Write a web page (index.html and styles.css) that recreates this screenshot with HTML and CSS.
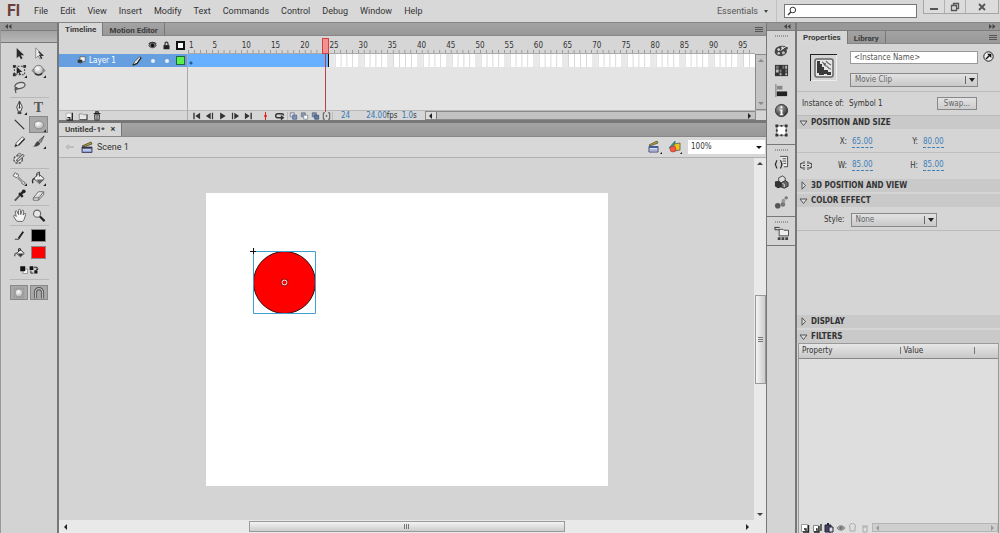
FILE: index.html
```html
<!DOCTYPE html>
<html lang="en">
<head>
<meta charset="utf-8">
<title>Untitled-1* - Flash</title>
<link rel="stylesheet" href="styles.css">
</head>
<body>
<div class="app">
  <header class="menubar">
    <div class="logo">Fl</div>
    <nav class="menu">
      <button>File</button><button>Edit</button><button>View</button><button>Insert</button><button>Modify</button><button>Text</button><button>Commands</button><button>Control</button><button>Debug</button><button>Window</button><button>Help</button>
    </nav>
    <button class="workspace">Essentials <span class="caret"></span></button>
    <label class="search">
      <svg width="10" height="10" viewBox="0 0 10 10"><circle cx="5.8" cy="4" r="2.8" fill="none" stroke="#333"/><path d="M3.8 6 1 9" stroke="#333" stroke-width="1.3"/></svg>
      <input type="text" aria-label="Search">
    </label>
    <div class="window-buttons">
      <button aria-label="Minimize"><svg width="10" height="10" viewBox="0 0 10 10"><path d="M1 6h8v2H1z" fill="#555"/></svg></button>
      <button aria-label="Restore"><svg width="10" height="10" viewBox="0 0 10 10"><path d="M3.5 3V1.5h5v5H7M1.5 3.5h5v5h-5z" fill="none" stroke="#555" stroke-width="1.3"/></svg></button>
      <button class="close" aria-label="Close"><svg width="10" height="10" viewBox="0 0 10 10"><path d="M2 2l6 6M8 2 2 8" stroke="#555" stroke-width="1.8"/></svg></button>
    </div>
  </header>

  <div class="workspace-body">
    <aside class="tools">
      <div class="dock-head"><svg width="7" height="5" viewBox="0 0 7 5"><path d="M3 0v5L0 2.500zM6.500 0v5l-3-2.500z" fill="#444"/></svg></div>
      <div class="tools-grip"></div>
      <div class="tool-group">
        <button aria-label="Selection"><svg viewBox="0 0 16 16"><path d="M5 2v11l2.600-2.400L9.500 14l1.800-1-1.900-3.200H13z" fill="#2b2b2b"/></svg></button>
        <button aria-label="Subselection"><svg viewBox="0 0 16 16"><path d="M5 2v11l2.600-2.400L9.500 14l1.800-1-1.900-3.200H13z" fill="#eee" stroke="#777" stroke-width=".8"/><path d="M8 6l4 4H9.500l2 3.500" fill="none" stroke="#333" stroke-width="1.500"/></svg></button>
        <button aria-label="Free Transform"><svg viewBox="0 0 16 16"><path d="M2.500 3.500h11v9h-11z" fill="none" stroke="#333" stroke-dasharray="2 1.500"/><path d="M1 2h3v3H1zM12 2h3v3h-3zM1 11h3v3H1z" fill="#333"/><path d="M5 4v8l2-2 1.500 3 1-1-1.500-2.500H11z" fill="#222"/><path d="M16 16v-3l-3 3z" fill="#222"/></svg></button>
        <button aria-label="3D Rotation"><svg viewBox="0 0 16 16"><path d="M1 8c2-3 12-3 14 0-2 4-12 4-14 0z" fill="#bbb" stroke="#666" stroke-width=".9"/><circle cx="8" cy="7.500" r="5" fill="url(#ball)" stroke="#666" stroke-width=".8"/><path d="M4 11c2 2.500 6 2.500 8 0" fill="none" stroke="#333" stroke-width="1.500"/><path d="M16 16v-3l-3 3z" fill="#222"/></svg></button>
        <button aria-label="Lasso"><svg viewBox="0 0 16 16"><ellipse cx="8.500" cy="6" rx="5.500" ry="3.200" fill="#ddd" stroke="#555" stroke-width="1.300" transform="rotate(-12 8 6)"/><path d="M4 8c-1.500 1 0 3 1.500 2S4.500 7 3.500 9s1 2 .5 5" fill="none" stroke="#555" stroke-width="1.200"/></svg></button>
      </div>
      <div class="tool-group">
        <button aria-label="Pen"><svg viewBox="0 0 16 16"><path d="M8 1 5 7.500 6.500 12h3L11 7.500z" fill="#e8e8e8" stroke="#444"/><path d="M8 2v6" stroke="#333"/><circle cx="8" cy="8" r="1" fill="#333"/><path d="M6 12.500h4V15H6z" fill="#444"/><path d="M16 16v-3l-3 3z" fill="#222"/></svg></button>
        <button class="text-tool" aria-label="Text">T</button>
        <button aria-label="Line"><svg viewBox="0 0 16 16"><path d="M3 3l10 10" stroke="#333" stroke-width="1.300"/></svg></button>
        <button class="selected" aria-label="Oval"><svg viewBox="0 0 16 16"><ellipse cx="8" cy="8" rx="5.500" ry="4.500" fill="url(#ball)" stroke="#777" stroke-width=".8"/><path d="M16 16v-3l-3 3z" fill="#222"/></svg></button>
        <button aria-label="Pencil"><svg viewBox="0 0 16 16"><path d="M3 13.500 4.500 9.500 11 3l2.500 2L7 12z" fill="#eee" stroke="#666"/><path d="M3 13.500l3-1.200-1.800-1.700z" fill="#222"/><path d="M7 12l6.500-7" stroke="#333" stroke-width="1.500"/></svg></button>
        <button aria-label="Brush"><svg viewBox="0 0 16 16"><path d="M14 2 8.500 7l2 2z" fill="#999" stroke="#555"/><path d="M2 13c3 0 2-4 5.500-5.500L10 10c-2 3-5 4-8 3z" fill="#444"/><path d="M16 16v-3l-3 3z" fill="#222"/></svg></button>
        <button aria-label="Deco"><svg viewBox="0 0 16 16"><ellipse cx="6.500" cy="9" rx="4.500" ry="4" fill="#e4e4e4" stroke="#555" stroke-width="1.500" stroke-dasharray="2.500 1"/><path d="M5 11 12.500 4" stroke="#555" stroke-width="3"/><path d="M6 10 12 4.500" stroke="#ddd" stroke-width="1.200"/><path d="M5 4.500l3-2 2 1" fill="none" stroke="#555"/></svg></button>
      </div>
      <div class="tool-group">
        <button aria-label="Bone"><svg viewBox="0 0 16 16"><path d="M3 14c-2-1 0-3 1-2.500L9.500 6C8 4 10 2.500 11 3.500c0-2 3-2 2.500 0 2 .5 1 3-.5 2.500-.8 1-1.500 1-2.500 1L5.500 12c.5 1-1 3-2.500 2z" transform="matrix(-1 0 0 1 16 0)" fill="#eee" stroke="#555"/><path d="M16 16v-3l-3 3z" fill="#222"/></svg></button>
        <button aria-label="Paint Bucket"><svg viewBox="0 0 16 16"><path d="M3 8l5-5 6 5-5 5.500z" fill="#eee" stroke="#444"/><path d="M6 9h8l-5 4.500z" fill="#666"/><path d="M6 6V2.500L9 1v5" fill="none" stroke="#444"/><path d="M4 8c-2 0-3 2-2 5" fill="none" stroke="#333" stroke-width="1.500"/><path d="M16 16v-3l-3 3z" fill="#222"/></svg></button>
        <button aria-label="Eyedropper"><svg viewBox="0 0 16 16"><path d="M9 7l-6 6.500" stroke="#555" stroke-width="2"/><path d="M7.500 5.500l4 4M9.500 6.500l3-3" stroke="#222" stroke-width="2.500"/><circle cx="12.500" cy="3.500" r="2" fill="#222"/></svg></button>
        <button aria-label="Eraser"><svg viewBox="0 0 16 16"><path d="M2.500 10.500 8 4h5.500L8.500 10.500zM2.500 10.500V13H8l5.500-6V4M8.500 10.500 8 13" fill="#eee" stroke="#666"/></svg></button>
      </div>
      <div class="tool-group">
        <button aria-label="Hand"><svg viewBox="0 0 16 16"><path d="M5 14 2 9.500C1 7.500 3 7 4.500 9L3.500 4c0-1.500 1.500-1.500 2 0L7 7V2.500c0-1.500 2-1.500 2 0L9.300 7l1.200-4c.5-1.500 2-1 1.800.5L12 7.500l1-1.500c1-1 2 0 1.500 1L13 12l-2 2.500z" fill="#f4f4f4" stroke="#555" stroke-width=".9"/></svg></button>
        <button aria-label="Zoom"><svg viewBox="0 0 16 16"><circle cx="6.500" cy="6" r="3.800" fill="#e8e8e8" stroke="#666" stroke-width="1.200"/><path d="M9.500 9l5 5" stroke="#222" stroke-width="2.300"/></svg></button>
      </div>
      <div class="tool-group">
        <button aria-label="Stroke Color"><svg viewBox="0 0 16 16"><path d="M3 12h4l5-8" fill="none" stroke="#444" stroke-width="1.300"/><path d="M7 11l5-7" stroke="#222" stroke-width="1.800"/></svg></button>
        <button aria-label="Stroke swatch"><span class="swatch black"></span></button>
        <button aria-label="Fill Color"><svg viewBox="0 0 16 16"><path d="M5 9l4-4 4 4-4 3.500z" fill="#f4f4f4" stroke="#333"/><path d="M7 7V4h2v2M5 8.500c-2 0-2 1-2 3.500" fill="none" stroke="#222"/><path d="M6 9h6l-3 3.500z" fill="#333"/></svg></button>
        <button aria-label="Fill swatch"><span class="swatch red"></span></button>
        <button class="end" aria-label="Black and White"><svg class="small" viewBox="0 0 16 16"><path d="M6.500 6.500h7v7h-7z" fill="#fff" stroke="#666"/><path d="M2 2h8v8H2z" fill="#111"/></svg></button>
        <button class="start" aria-label="Swap Colors"><svg class="small" viewBox="0 0 16 16"><path d="M1 2h6v6H1zM8.500 8.500h5v5h-5z" fill="#111"/><path d="M8 3.500h5V7M11 6l2 2 2-2M3 9v4h4" fill="none" stroke="#222" stroke-width="1.500"/></svg></button>
      </div>
      <div class="tool-group options">
        <button class="selected" aria-label="Object Drawing"><svg viewBox="0 0 16 16"><path d="M2.500 2.500h11v11h-11z" fill="none" stroke="#888" stroke-dasharray="1 1"/><circle cx="8" cy="8" r="4.500" fill="url(#ball)" stroke="#888" stroke-width=".8"/></svg></button>
        <button class="selected" aria-label="Snap to Objects"><svg viewBox="0 0 16 16"><path d="M4 14V7a4 4 0 0 1 8 0v7" fill="none" stroke="#555" stroke-width="3.600"/><path d="M4 14V7a4 4 0 0 1 8 0v7" fill="none" stroke="#bbb" stroke-width="1.500"/></svg></button>
      </div>
    </aside>

    <main class="center">
      <section class="timeline">
        <div class="tabs">
          <button class="tab active">Timeline</button><button class="tab">Motion Editor</button>
          <span class="panel-menu"></span>
        </div>
        <div class="timeline-grid">
          <div class="layer-head">
            <svg width="9" height="9" viewBox="0 0 12 12"><path d="M1 6c2-4 8-4 10 0-2 4-8 4-10 0z" fill="#777" stroke="#333"/><circle cx="6" cy="6" r="2.200" fill="#111"/><path d="M1 4c2-3 8-3 10 0" fill="none" stroke="#333" stroke-width="1.500"/></svg>
            <svg width="9" height="9" viewBox="0 0 12 12"><path d="M2 5.500h8V11H2z" fill="#222"/><path d="M4 6V3.500a2 2 0 0 1 4 0V6" fill="none" stroke="#333" stroke-width="1.600"/></svg>
            <span class="outline-box"></span>
          </div>
          <div class="ruler">
            <span class="ticks first">1</span><span class="ticks">5</span><span class="ticks">10</span><span class="ticks">15</span><span class="ticks">20</span><span class="ticks">25</span><span class="ticks">30</span><span class="ticks">35</span><span class="ticks">40</span><span class="ticks">45</span><span class="ticks">50</span><span class="ticks">55</span><span class="ticks">60</span><span class="ticks">65</span><span class="ticks">70</span><span class="ticks">75</span><span class="ticks">80</span><span class="ticks">85</span><span class="ticks">90</span><span class="ticks last">95</span>
          </div>
          <div class="corner"></div>
          <div class="layers">
            <div class="layer-row">
              <svg class="layer-icon" width="9" height="9" viewBox="0 0 12 12"><path d="M4 1h7v6H8l-3 3H4z" fill="#f4f4f4" stroke="#555"/><path d="M1 5h6v4H1z" fill="#333"/></svg>
              <span class="layer-name">Layer 1</span>
              <svg width="10" height="10" viewBox="0 0 12 12"><path d="M1 11l2-4 6-6 2 1-5 7z" fill="#eee" stroke="#444"/><path d="M1 11l5-2 5-7" stroke="#222" stroke-width="1.500" fill="none"/></svg>
              <span class="dot"></span><span class="dot"></span><span class="layer-color"></span>
            </div>
          </div>
          <div class="frames">
            <div class="frame-row"><span class="span-block"></span><span class="cells"></span><span class="cells"></span><span class="cells"></span><span class="cells"></span><span class="cells"></span><span class="cells"></span><span class="cells"></span><span class="cells"></span><span class="cells"></span><span class="cells"></span><span class="cells"></span><span class="cells"></span><span class="cells"></span><span class="cells"></span><span class="cells last"></span></div>
          </div>
          <div class="vbar"><i class="up"></i><i class="down"></i></div>
          <div class="layer-foot">
            <svg width="10" height="10" viewBox="0 0 12 12"><path d="M2.500 2.500h7v8h-7z" fill="#f4f4f4" stroke="#aaa"/><path d="M10 2v9H3M4 8h3v3" stroke="#222" stroke-width="1.500" fill="none"/></svg>
            <svg width="10" height="10" viewBox="0 0 12 12"><path d="M1.500 3.500h4l1 1h4v6h-9z" fill="#e8e8e8" stroke="#888"/><path d="M2 10.500h9V4" stroke="#333" fill="none"/></svg>
            <svg width="10" height="10" viewBox="0 0 12 12"><path d="M2 3h8M4.500 2.500V1h3v1.500" stroke="#222" stroke-width="1.300" fill="none"/><path d="M3 4.500h6L8.500 11h-5z" fill="#ddd" stroke="#222"/><path d="M5 5v6M7 5v6" stroke="#444"/></svg>
          </div>
          <div class="playback">
            <button aria-label="First frame"><svg viewBox="0 0 10 10"><path d="M1 1h1.700v8H1zM9.500 1v8l-6-4z" fill="#333"/></svg></button>
            <button aria-label="Step back"><svg viewBox="0 0 10 10"><path d="M8 1h1.500v8H8zM6.500 1v8l-6-4z" fill="#333"/></svg></button>
            <button aria-label="Play"><svg viewBox="0 0 10 10"><path d="M2 0.500 9 5 2 9.500z" fill="#333"/></svg></button>
            <button aria-label="Step forward"><svg viewBox="0 0 10 10"><path d="M0.500 1H2v8H.5zM3.500 1l6 4-6 4z" fill="#333"/></svg></button>
            <button aria-label="Last frame"><svg viewBox="0 0 10 10"><path d="M7.500 1h1.700v8H7.500zM.5 1l6 4-6 4z" fill="#333"/></svg></button>
            <button class="gap" aria-label="Center frame"><svg viewBox="0 0 10 10"><path d="M5 0v10" stroke="#d22" stroke-width="1.300"/><path d="M5 2.500 7 5 5 7.500 3 5z" fill="#d22"/></svg></button>
            <button aria-label="Loop"><svg class="loop" viewBox="0 0 12 9"><path d="M9 6.500H4a2 2 0 0 1 0-4.500h4c1.500 0 2.500.5 2.500 2" fill="none" stroke="#333" stroke-width="1.600"/><path d="M7.500 3.500l4 3-4 3z" fill="#333"/></svg></button>
            <div class="onion">
              <svg viewBox="0 0 10 10"><path d="M1 1h5v5H1z" fill="#dde" stroke="#778"/><path d="M4 4h5v5H4z" fill="#7b94c8" stroke="#567"/></svg>
              <svg viewBox="0 0 10 10"><path d="M1 1h5v5H1z" fill="#89a" stroke="#778"/><path d="M4 4h5v5H4z" fill="#fff" stroke="#789"/></svg>
              <svg viewBox="0 0 10 10"><path d="M1 1h5v5H1z" fill="#8094b8" stroke="#567"/><path d="M4 4h5v5H4z" fill="#5b78b0" stroke="#456"/></svg>
              <svg viewBox="0 0 10 10"><path d="M3 1H1v8h2M7 1h2v8H7" fill="none" stroke="#333"/><circle cx="5" cy="5" r="1" fill="#333"/></svg>
            </div>
            <span class="num frame-no">24</span>
            <span class="fps"><span class="num">24.00</span>fps</span>
            <span class="time"><span class="num">1.0</span>s</span>
            <div class="hbar"><span class="arrow-box"><i class="left"></i></span><i class="right"></i></div>
          </div>
          <div class="playhead-lane"><div class="playhead"></div></div>
        </div>
      </section>

      <section class="document">
        <div class="tabs doc-tabs"><button class="tab active">Untitled-1* <span class="x">×</span></button></div>
        <div class="scene-bar">
          <svg width="10" height="8" viewBox="0 0 10 8"><path d="M0 4l4-3v2h5v2H4v2z" fill="#bdbdbd"/></svg>
          <svg width="12" height="12" viewBox="0 0 12 12"><path d="M1 5 10 1l1 2-9 3z" fill="#b9a42b" stroke="#333" stroke-width=".7"/><path d="M1 6h10v5.500H1z" fill="#8c9fd0" stroke="#335" stroke-width=".8"/><path d="M1 6h10v1.500H1z" fill="#334"/><path d="M2 9h8" stroke="#eef"/></svg>
          <span class="scene-name">Scene 1</span>
          <button class="scene-icon" aria-label="Edit Scene"><svg width="14" height="14" viewBox="0 0 14 14"><path d="M1 5 9 1l1 2-8 3z" fill="#b9a42b" stroke="#443" stroke-width=".7"/><path d="M1 6.500h9V12H1z" fill="#dde3f5" stroke="#447"/><path d="M1 6h9v2H1z" fill="#445a99"/><path d="M2 10h7" stroke="#7789bb"/><path d="M14 12v2h-2z" fill="#111"/></svg></button>
          <button class="scene-icon" aria-label="Edit Symbols"><svg width="14" height="14" viewBox="0 0 14 14"><path d="M7 1 1 8h6z" fill="#2fa58c" stroke="#277" stroke-width=".8"/><path d="M6 4l6-1v7l-6 1z" fill="#e8c520" stroke="#654" stroke-width=".8"/><circle cx="5" cy="9" r="3" fill="#ee5b42" stroke="#a33" stroke-width=".6"/><path d="M14 12v2h-2z" fill="#111"/></svg></button>
          <div class="zoom"><select aria-label="Zoom"><option>100%</option></select></div>
        </div>
        <div class="pasteboard">
          <div class="canvas">
            <div class="stage">
              <svg class="symbol" width="69" height="69" viewBox="-3 -3 69 69"><circle cx="31.500" cy="31.500" r="31" fill="#f00" stroke="#311"/><path d="M.5.5h62v62H.5z" fill="none" stroke="#3fa0d0"/><path d="M-3 .5h6M.5-3v6" stroke="#111"/><circle cx="31.500" cy="31.500" r="2.500" fill="none" stroke="#fff"/><circle cx="31.500" cy="31.500" r="3.500" fill="none" stroke="#622" stroke-width=".8"/></svg>
            </div>
          </div>
          <div class="scroll-v"><i class="up"></i><span class="thumb"></span><i class="down"></i></div>
          <div class="scroll-h"><i class="left"></i><span class="thumb"></span><i class="right"></i></div>
        </div>
      </section>
    </main>

    <aside class="icon-dock">
      <div class="dock-head right"><svg width="7" height="5" viewBox="0 0 7 5"><path d="M3 0v5L0 2.500zM6.500 0v5l-3-2.500z" fill="#444"/></svg></div>
      <div class="icon-group first">
        <button aria-label="Color"><svg viewBox="0 0 16 16"><path d="M1 8c1-5 8-6 13-4 2 2 0 3-1 3 2 2 0 6-5 7-6 0-8-3-7-6z" fill="#444"/><circle cx="5" cy="7" r="1.400" fill="#ddd"/><circle cx="9" cy="5" r="1.300" fill="#ddd"/><circle cx="5" cy="11" r="1.300" fill="#ccc"/><circle cx="10" cy="10.500" r="1.600" fill="#bbb"/><path d="M7 8l8-6" stroke="#eee"/></svg></button>
        <button aria-label="Swatches"><svg viewBox="0 0 16 16"><path d="M1 2h14v12H1z" fill="#333"/><path d="M2 3h3v3H2zM9 3h2v3H9zM6 7h2v3H6zM12 7h2v3h-2z" fill="#777"/><path d="M2 7h3v3H2zM6 11h2v2H6zM12 11h2v2h-2zM12 3h2v3h-2z" fill="#bbb"/></svg></button>
        <button aria-label="Align"><svg viewBox="0 0 16 16"><path d="M2 1v14" stroke="#777"/><path d="M3 3h6v4H3z" fill="#888"/><path d="M3 9h11v5H3z" fill="#222"/></svg></button>
        <button aria-label="Info"><svg viewBox="0 0 16 16"><circle cx="8" cy="8" r="6.500" fill="url(#dark)" stroke="#333"/><path d="M7 3.500h2v2H7zM6 7h3v5h1v1H6v-1h1V8H6z" fill="#fff"/></svg></button>
        <button aria-label="Transform"><svg viewBox="0 0 16 16"><path d="M3 3h10v10H3z" fill="#fff" stroke="#777"/><path d="M1.500 1.500h3v3h-3zM11.500 1.500h3v3h-3zM1.500 11.500h3v3h-3zM11.500 11.500h3v3h-3zM7 2h2v2H7zM7 12h2v2H7zM2 7h2v2H2zM12 7h2v2h-2z" fill="#333"/></svg></button>
      </div>
      <div class="icon-group">
        <button aria-label="Code Snippets"><svg viewBox="0 0 16 16"><path d="M6.500 1.500h8v11h-4" fill="#eee" stroke="#444"/><path d="M9 4h4M9 6.500h4M10 9h3" stroke="#444"/><path d="M3.500 6C1.500 6 3 9.500 1 10c2 .5.500 4 2.500 4M6.500 6c2 0 .5 3.500 2.500 4-2 .5-.5 4-2.500 4" fill="none" stroke="#222" stroke-width="1.200"/></svg></button>
        <button aria-label="Components"><svg viewBox="0 0 16 16"><path d="M5 3l4-2 3 2v5l-4 1-3-2z" fill="#ddd" stroke="#444"/><path d="M1 7l4-1 3 2v5l-4 1-3-2z" fill="#333"/><path d="M8 8l4-2 3 2v4l-4 2-3-1z" fill="#666" stroke="#333"/><path d="M9 9l2 1v3" fill="none" stroke="#ddd"/></svg></button>
        <button aria-label="Motion Presets"><svg viewBox="0 0 16 16"><circle cx="4" cy="11.500" r="3" fill="#555"/><circle cx="9.500" cy="10" r="2.500" fill="#777"/><circle cx="10" cy="6" r="2" fill="#999"/><circle cx="13" cy="3" r="1.800" fill="#777"/></svg></button>
      </div>
      <div class="icon-group last-group">
        <button aria-label="Project"><svg viewBox="0 0 16 16"><path d="M1 1v3h5M1 1.500h5" fill="none" stroke="#333"/><path d="M5.500 3.500h4l1 1h5v6h-10z" fill="#eee" stroke="#444"/><path d="M4 12h3v3H4zM8 12h3v3H8zM12 12h3v3h-3z" fill="#444"/></svg></button>
      </div>
    </aside>

    <aside class="properties">
      <div class="dock-head right"><svg width="7" height="5" viewBox="0 0 7 5"><path d="M0 0v5l3-2.500zM3.500 0v5l3-2.500z" fill="#444"/></svg></div>
      <div class="tabs"><button class="tab active">Properties</button><button class="tab">Library</button><span class="panel-menu"></span></div>
      <div class="identity">
        <svg class="clip-icon" width="27" height="27" viewBox="0 0 27 27"><path d="M0 27V0h27" fill="none" stroke="#222" stroke-width="2"/><path d="M1 26.500h25.500V1" fill="none" stroke="#eee"/><rect x="5" y="5" width="18" height="18" rx="2" fill="#e6e6e6" stroke="#666" stroke-width="1.500"/><path d="M7 7h3v3h2v3h2v3h4v2h3v3h-4v-1h-3v1H9v-2H7z" fill="#3a3a3a"/><path d="M12 8c2 0 2 4 4 4s2 3 5 3M16 7c1 2 3 3 5 4" fill="none" stroke="#666" stroke-width="1.200"/><circle cx="15" cy="10" r="1" fill="#555"/></svg>
        <div class="fields">
          <input type="text" class="name-input" value="&lt;Instance Name&gt;" aria-label="Instance Name">
          <div class="select"><select aria-label="Instance behavior"><option>Movie Clip</option></select></div>
        </div>
        <button class="go" aria-label="ActionScript panel"><svg width="11" height="11" viewBox="0 0 11 11"><circle cx="5.500" cy="5.500" r="4.700" fill="#eee" stroke="#222"/><path d="M3 8l4-4" stroke="#111" stroke-width="1.500"/><path d="M4 2.700h4.300V7z" fill="#111"/></svg></button>
      </div>
      <div class="instance"><span>Instance of:</span><span>Symbol 1</span><button class="swap">Swap...</button></div>
      <h2 class="section first"><svg width="9" height="8" viewBox="0 0 9 8"><path d="M1 2h7L4.500 6.500z" fill="#ddd" stroke="#555"/></svg>POSITION AND SIZE</h2>
      <div class="coords"><i></i><label for="px">X:</label><input id="px" value="65.00"><label for="py">Y:</label><input id="py" value="80.00"></div>
      <div class="coords size"><svg width="12" height="9" viewBox="0 0 12 9"><path d="M5 2H2.500a2.500 2.500 0 0 0 0 5H5M7 2h2.500a2.500 2.500 0 0 1 0 5H7" fill="none" stroke="#444" stroke-width="1.200"/><path d="M3 4.500h2M7 4.500h2M4 0v1M8 0v1M4 8v1M8 8v1" stroke="#444"/></svg><label for="pw">W:</label><input id="pw" value="85.00"><label for="ph">H:</label><input id="ph" value="85.00"></div>
      <h2 class="section"><svg width="9" height="9" viewBox="0 0 9 9"><path d="M3 .8v7.400L6.500 4.500z" fill="#ddd" stroke="#555"/></svg>3D POSITION AND VIEW</h2>
      <h2 class="section"><svg width="9" height="8" viewBox="0 0 9 8"><path d="M1 2h7L4.500 6.500z" fill="#ddd" stroke="#555"/></svg>COLOR EFFECT</h2>
      <div class="style-row"><label for="style">Style:</label><div class="select"><select id="style"><option>None</option></select></div></div>
      <div class="spacer"></div>
      <h2 class="section"><svg width="9" height="9" viewBox="0 0 9 9"><path d="M3 .8v7.400L6.500 4.500z" fill="#ddd" stroke="#555"/></svg>DISPLAY</h2>
      <h2 class="section filters-head"><svg width="9" height="8" viewBox="0 0 9 8"><path d="M1 2h7L4.500 6.500z" fill="#ddd" stroke="#555"/></svg>FILTERS</h2>
      <div class="filters">
        <table><thead><tr><th>Property</th><th>Value</th><th></th></tr></thead></table>
        <div class="filter-foot">
          <svg viewBox="0 0 10 10"><path d="M1.500 1.500h6v7h-6z" fill="#fff" stroke="#999"/><path d="M8.500 2v7H3M4 6h2v2" fill="none" stroke="#222" stroke-width="1.400"/></svg>
          <svg viewBox="0 0 10 10"><path d="M1.500 2.500h5v6h-5z" fill="#fff" stroke="#888"/><path d="M7 3v6H2M9 1v7M4 6h1v2" fill="none" stroke="#222" stroke-width="1.300"/></svg>
          <svg viewBox="0 0 10 10"><path d="M1 2h6v7H1z" fill="#446" stroke="#223"/><path d="M3 0h2v2H3z" fill="#223"/><path d="M5 4h4v5H5z" fill="#dde" stroke="#223"/></svg>
          <svg viewBox="0 0 10 10"><path d="M1 5c2-3 6-3 8 0-2 3-6 3-8 0z" fill="#aaa" stroke="#888"/><circle cx="5" cy="5" r="1.800" fill="#777"/></svg>
          <svg viewBox="0 0 10 10"><path d="M2 8V5a3 3 0 1 1 5 0v3z" fill="none" stroke="#aaa"/></svg>
          <svg viewBox="0 0 10 10"><path d="M2 3h6M3 4h4v5H3z" fill="none" stroke="#aaa"/></svg>
          <div class="hbar faint"><i class="left"></i><i class="right"></i></div>
        </div>
      </div>
    </aside>
  </div>
</div>
<svg width="0" height="0" class="defs"><defs>
  <radialGradient id="ball" cx=".4" cy=".35" r=".7"><stop offset="0" stop-color="#fff"/><stop offset="1" stop-color="#aaa"/></radialGradient>
  <radialGradient id="dark" cx=".4" cy=".3" r=".8"><stop offset="0" stop-color="#aaa"/><stop offset="1" stop-color="#222"/></radialGradient>
</defs></svg>
</body>
</html>
```
FILE: styles.css
```css
* { box-sizing: border-box; }
body {
  margin: 0;
  background: #d5d5d5;
  color: #333;
  font: 8px/12px "DejaVu Sans Condensed", "DejaVu Sans", sans-serif;
}
button, input, select { font: inherit; color: inherit; margin: 0; padding: 0; border: 0; background: none; border-radius: 0; }
svg { display: block; flex: none; }
.defs { position: absolute; }
.app { display: flex; flex-direction: column; height: 100vh; overflow: hidden; }

/* Menu bar */
.menubar { display: flex; align-items: flex-start; height: 22px; flex: none; background: #d8d8d8; font: 9px/20px Roboto, sans-serif; }
.logo { width: 34px; padding-left: 7px; font: bold 16px/21px "Liberation Sans Narrow", Roboto, sans-serif; color: #6b3f3a; }
.menu { display: flex; gap: 12px; flex: 1; padding-top: 1px; }
.workspace { display: flex; align-items: center; gap: 6px; height: 22px; padding-right: 8px; margin-right: 7px; color: #555; border-right: 1px solid #c2c2c2; }
.caret { border: 2px solid transparent; border-top: 3px solid #444; border-bottom: 0; }
.search { display: flex; align-items: center; width: 133px; height: 14px; margin: 4px 6px 0 0; padding-left: 2px; background: #fff; border: 1px solid #777; }
.search input { flex: 1; min-width: 0; height: 12px; outline: 0; }
.window-buttons { display: flex; height: 14px; margin-right: 1px; border: 1px solid #a6a6a6; border-top: 0; background: #dcdcdc; }
.window-buttons button { display: grid; place-items: center; width: 21px; border-right: 1px solid #b0b0b0; }
.window-buttons button:last-child { width: 32px; border: 0; }

/* Docks */
.workspace-body { display: flex; flex: 1; min-height: 0; border-top: 1px solid #858585; background: #777; }
.dock-head { display: flex; align-items: center; height: 8px; padding: 0 4px; background: #989898; border-bottom: 1px solid #7c7c7c; }
.dock-head.right { justify-content: flex-end; }
.tools { width: 57px; flex: none; margin-right: 2px; background: #d3d3d3; border-left: 1px solid #999; }
.tools-grip { height: 12px; background: linear-gradient(#a2a2a2, #b8b8b8); border-bottom: 1px solid #777; }
.tool-group { display: grid; grid-template-columns: 19px 19px; grid-auto-rows: 17px; margin: 0 8px 0 9px; padding: 1px 0; border-bottom: 1px solid #b8b8b8; }
.tools-grip + .tool-group { padding-top: 2px; }
.tool-group button { display: grid; place-items: center; }
.tool-group svg { width: 15px; height: 15px; }
.tool-group .small { width: 10px; height: 10px; }
.tool-group .end { justify-items: end; }
.tool-group .start { justify-items: start; }
.tool-group .selected { background: #a9a9a9; border: 1px solid #888; }
.tool-group .selected svg { width: 14px; height: 14px; }
.tool-group .text-tool { font: bold 14px/16px "Liberation Serif", serif; color: #555; }
.swatch { width: 15px; height: 13px; border: 1px solid #888; }
.black { background: #000; }
.red { background: #f00; }
.tool-group.options { gap: 0 2px; grid-template-columns: 18px 18px; grid-auto-rows: 15px; padding-top: 5px; border: 0; }

/* Tabs */
.tabs { display: flex; flex: none; height: 13px; background: linear-gradient(#a3a3a3, #989898); border-bottom: 1px solid #888; }
.tab { height: 13px; padding: 0 6px; font: 700 8px/13px Roboto, sans-serif; color: #3c3c3c; border-right: 1px solid #777; }
.tab:not(.active) { border-bottom: 1px solid #888; padding-top: 1px; }
.tab.active { background: #d6d6d6; }
.panel-menu { width: 8px; height: 5px; margin: 4px 3px 0 auto; background: repeating-linear-gradient(#555 0 1px, transparent 1px 2px); }

/* Timeline */
.center { display: flex; flex-direction: column; flex: 1; min-width: 0; }
.timeline { flex: none; background: #d6d6d6; }
.timeline-grid { position: relative; display: grid; grid-template-columns: 129px 1fr 11px; grid-template-rows: 18px 56px 10px; }
.layer-head { display: flex; align-items: center; justify-content: flex-end; gap: 5px; padding: 1px 3px 0 0; }
.outline-box { width: 9px; height: 9px; border: 2px solid #111; background: #fff; }
.ruler { display: flex; line-height: 19px; border-bottom: 1px solid #aaa; }
.ticks { --n: 5; flex: var(--n) 0 0; min-width: 0; height: 17px; padding-left: 1px; background: linear-gradient(90deg, #999 1px, transparent 1px) 0 100% / calc(100% / var(--n)) 3px repeat-x; }
.ticks.first { --n: 4; }
.ticks.last { --n: 3; }
.layers { background: #e3e3e3; border-right: 1px solid #aaa; }
.layer-row { display: flex; align-items: center; gap: 9px; height: 13px; padding-right: 2px; padding-left: 18px; background: #669fe0; color: #fff; }
.layer-name { flex: 1; margin-left: -6px; }
.dot { width: 4px; height: 4px; border-radius: 2px; background: #e8f0fa; margin-right: 1px; }
.layer-color { width: 9px; height: 9px; background: #5cf04a; border: 1px solid #264; }
.layer-row .layer-color { margin-left: -3px; }
.frames { background: #e4e4e4; }
.frame-row { display: flex; height: 13px; }
.span-block { flex: 24 0 0; background: radial-gradient(circle at 3px 9px, #245a9c 0 1px, transparent 2px), #66b0ff; border-right: 1px solid #111; }
.cells { --n: 5; flex: var(--n) 0 0; background: linear-gradient(90deg, #e9e9e9, #e9e9e9) 0 0 / calc(100% / var(--n)) 100% no-repeat, linear-gradient(90deg, #d9d9d9 1px, #fff 1px) 0 0 / calc(100% / var(--n)) 100%; }
.cells.last { --n: 3; }
i.up, i.down, i.left, i.right { width: 0; height: 0; border: 3px solid transparent; flex: none; }
i.up { border-top: 0; border-bottom-color: #444; }
i.down { border-bottom: 0; border-top-color: #444; }
i.left { border-left: 0; border-right-color: #222; }
i.right { border-right: 0; border-left-color: #222; }
.vbar { display: flex; flex-direction: column; align-items: center; justify-content: space-between; padding: 4px 0; background: #c4c4c4; border: 1px solid #8a8a8a; border-width: 1px 0 1px 1px; }
.vbar i { opacity: .45; }
.layer-foot, .playback { display: flex; align-items: center; border-top: 1px solid #b8b8b8; }
.layer-foot { gap: 4px; padding-left: 5px; border-right: 1px solid #aaa; }
.playback { grid-column: 2 / 4; gap: 4px; padding-left: 4px; }
.playback svg { width: 9px; height: 8px; }
.playback .loop { width: 11px; }
.playback .gap { margin-left: 4px; }
.onion { display: flex; gap: 2px; margin-left: -2px; padding: 0 1px; border: 1px solid #bbb; border-width: 0 1px; }
.num { color: #3477b8; }
.frame-no { margin-left: 4px; }
.fps { margin-left: 12px; white-space: nowrap; }
.time { margin-right: 4px; white-space: nowrap; }
.hbar { display: flex; flex: 1; align-items: center; justify-content: space-between; height: 9px; padding-right: 4px; margin-right: 10px; background: #c2c2c2; border: 1px solid #8a8a8a; }
.arrow-box { display: grid; place-items: center; width: 11px; height: 7px; background: #ddd; border-right: 1px solid #777; }
.playhead-lane { position: absolute; left: 129px; right: 11px; top: 2px; bottom: 10px; pointer-events: none; }
.playhead { position: absolute; left: calc(100% * 23 / 97); width: 7px; height: 100%; }
.playhead::before { content: ""; display: block; height: 14px; background: #f58f90; border: 1px solid #c44; }
.playhead::after { content: ""; display: block; width: 1px; height: calc(100% - 14px); margin: 0 auto; background: #b8404a; }

/* Document */
.document { display: flex; flex-direction: column; flex: 1; min-height: 0; border-top: 3px solid #777; }
.doc-tabs { height: 14px; }
.x { padding-left: 4px; font-size: 9px; }
.scene-bar { display: flex; align-items: center; gap: 6px; flex: none; height: 21px; padding: 0 1px 0 6px; background: #d8d8d8; border-bottom: 1px solid #b0b0b0; }
.scene-name { flex: 1; margin-left: -2px; font: 9px/20px Roboto, sans-serif; }
.zoom { position: relative; width: 77px; background: #fff; }
.zoom select { width: 100%; height: 14px; padding-left: 3px; appearance: none; }
.zoom::after { content: ""; position: absolute; right: 3px; top: 6px; border: 3px solid transparent; border-top-color: #111; border-bottom: 0; pointer-events: none; }
.pasteboard { display: grid; grid-template: minmax(0, 1fr) 13px / minmax(0, 1fr) 12px; flex: 1; min-height: 0; background: #e9e9e9; }
.canvas { display: grid; place-items: center; overflow: hidden; background: #d4d4d4; }
.stage { position: relative; width: 402px; height: 293px; background: #fff; }
.symbol { position: absolute; left: 44px; top: 55px; }
.scroll-v { display: flex; flex-direction: column; align-items: center; padding: 4px 0; }
.scroll-v .thumb { width: 11px; flex: 0 1 25%; margin: 130px 0 auto; background: repeating-linear-gradient(#777 0 1px, transparent 1px 2px) 50% 50% / 5px 5px no-repeat, linear-gradient(90deg, #f4f4f4, #ccc); border: 1px solid #999; }
.scroll-h { display: flex; align-items: center; justify-content: space-between; padding: 0 5px; }
.scroll-h .thumb { height: 11px; flex: 0 1 316px; background: repeating-linear-gradient(90deg, #777 0 1px, transparent 1px 2px) 50% 50% / 5px 5px no-repeat, linear-gradient(#f4f4f4, #ccc); border: 1px solid #999; }

/* Icon dock */
.icon-dock { width: 28px; flex: none; margin: 0 2px 0 1px; background: #d4d4d4; }
.icon-group { display: grid; grid-auto-rows: 20px; justify-items: center; padding: 7px 0 4px; border-bottom: 1px solid #777; background: repeating-linear-gradient(90deg, #999 0 1px, transparent 1px 2px) 8px 4px / 14px 2px no-repeat; }
.icon-group.first { padding-top: 9px; }
.icon-group.last-group { padding: 6px 0 2px; }
.icon-group button { display: grid; place-items: center; }
.icon-group svg { width: 15px; height: 15px; }

/* Properties */
.properties { display: flex; flex-direction: column; width: 203px; flex: none; background: #d5d5d5; }
.identity { display: flex; align-items: flex-start; padding: 7px 6px 4px 13px; border-bottom: 1px solid #bbb; }
.clip-icon { margin-top: 3px; }
.fields { display: grid; gap: 9px; width: 128px; margin: 0 5px 0 13px; }
.name-input { width: 100%; height: 13px; padding: 0 3px; background: #fff; border: 1px solid #999; color: #555; }
.select { position: relative; }
.select select { width: 100%; height: 14px; padding-left: 4px; appearance: none; border: 1px solid #888; background: linear-gradient(#e2e2e2, #c9c9c9); color: #666; }
.select::after { content: ""; position: absolute; right: 3px; top: 5px; border: 3px solid transparent; border-top: 4px solid #222; border-bottom: 0; pointer-events: none; }
.select::before { content: ""; position: absolute; right: 12px; top: 3px; width: 1px; height: 8px; background: #666; }
.go { align-self: flex-start; margin-left: auto; }
.instance { display: flex; align-items: center; gap: 5px; height: 24px; padding: 0 23px 0 5px; border-bottom: 1px solid #bbb; }
.swap { width: 40px; height: 13px; margin-left: auto; border: 1px solid #888; background: linear-gradient(#e2e2e2, #cdcdcd); color: #666; line-height: 11px; }
.section { display: flex; align-items: center; gap: 3px; height: 13px; margin: 0 0 2px; padding-left: 2px; background: #c9c9c9; font-size: 8px; color: #333; flex: none; }
.section.first, .filters-head.section { margin-bottom: 0; }
.coords { display: grid; grid-template-columns: 12px 30px 26px 35px 26px; align-items: center; gap: 0 5px; height: 24px; padding: 3px 0 0 3px; border-bottom: 1px solid #c0c0c0; }
.coords.size { height: 25px; padding-top: 0; border: 0; margin-bottom: 1px; }
.coords label { text-align: right; }
.coords input { width: 21px; height: 11px; color: #3d7fb8; border-bottom: 1px dashed #3d7fb8; }
.style-row { display: flex; align-items: center; gap: 6px; height: 22px; padding-left: 27px; border-bottom: 1px solid #bbb; }
.style-row .select { width: 86px; }
.spacer { flex: 0 0 84px; }
.filters { display: flex; flex-direction: column; flex: 1; min-height: 0; margin: 0 1px; background: #dedede; border: 1px solid #999; border-bottom: 0; }
.filters table { width: 100%; border-collapse: collapse; table-layout: fixed; }
.filters th { height: 14px; padding: 0 0 0 3px; font-weight: 400; text-align: left; background: linear-gradient(#e6e6e6, #c8c8c8); border-bottom: 1px solid #888; }
.filters th:nth-child(1) { width: 51%; }
.filters th:nth-child(2) { width: 37%; }
.filters th + th { background: linear-gradient(#777, #777) 0 50% / 1px 7px no-repeat, linear-gradient(#e6e6e6, #c8c8c8); }
.filter-foot { display: flex; align-items: center; gap: 2px; height: 11px; margin-top: auto; padding-left: 1px; }
.filter-foot svg { width: 10px; height: 10px; }
.hbar.faint { margin: 0; padding: 0 3px; background: #cfcfcf; border-color: #b5b5b5; }
.faint i { opacity: .3; }
```
